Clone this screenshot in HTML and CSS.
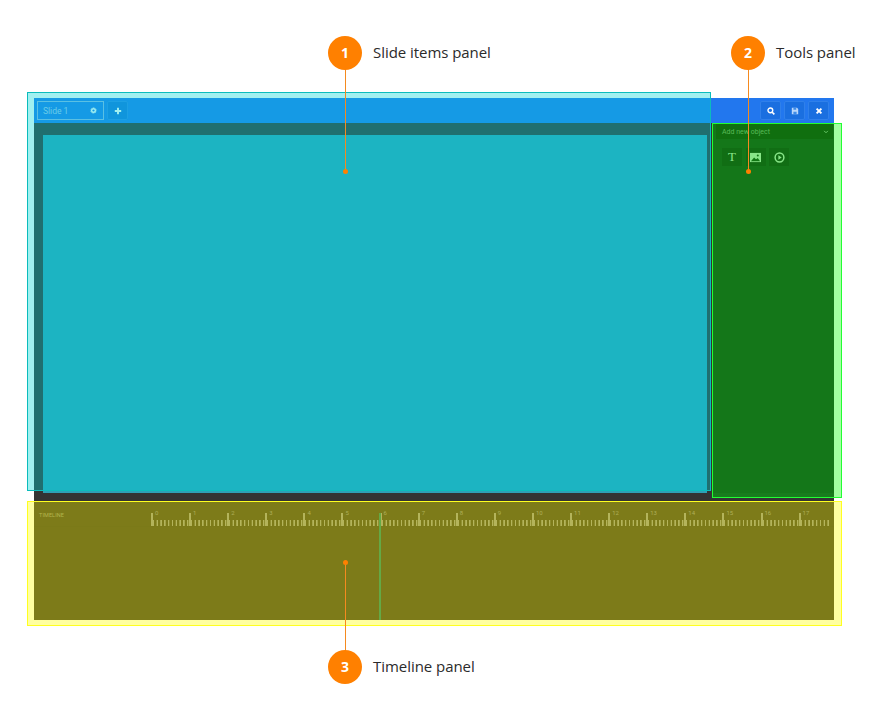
FILE: index.html
```html
<!DOCTYPE html>
<html lang="en">

<head>
  <meta charset="UTF-8">
  <title>Slide editor panels</title>
  <link rel="stylesheet" href="styles.css">
</head>

<body>
  <div class="stage">

    <!-- editor window -->
    <div class="editor">
      <div class="topbar">
        <div class="tabs">
          <div class="tab">
            <span>Slide 1</span>
            <svg class="tab-gear" viewBox="0 0 10 10"><circle cx="5" cy="5" r="2.6" fill="none" stroke="#fff" stroke-width="2"/><circle cx="5" cy="5" r="4" fill="none" stroke="#fff" stroke-width="1" stroke-dasharray="1.4 1.1"/></svg>
          </div>
          <div class="icon-btn">
            <svg viewBox="0 0 10 10"><path d="M5 1v8M1 5h8" stroke="#fff" stroke-width="2.4"/></svg>
          </div>
        </div>
        <div class="actions">
          <div class="icon-btn">
            <svg viewBox="0 0 10 10"><circle cx="4.2" cy="4.2" r="3" fill="none" stroke="#fff" stroke-width="1.7"/><path d="M6.2 6.2l3 3" stroke="#fff" stroke-width="2"/></svg>
          </div>
          <div class="icon-btn">
            <svg viewBox="0 0 10 10"><path d="M1 1h6.5L9 2.5V9H1z" fill="#b9d6fa"/><path d="M3 1h3.5v2.5H3zM3 6h4v3H3z" fill="#3f8ce8"/></svg>
          </div>
          <div class="icon-btn">
            <svg viewBox="0 0 10 10"><path d="M2 2l6 6M8 2l-6 6" stroke="#fff" stroke-width="2.4"/></svg>
          </div>
        </div>
      </div>

      <div class="workspace">
        <div class="canvas-area">
          <div class="canvas"></div>
        </div>
        <div class="tools">
          <div class="tools-head">
            <span>Add new object</span>
            <svg class="chevron" viewBox="0 0 8 8"><path d="M1.5 2.5L4 5l2.5-2.5" fill="none" stroke="#aaa" stroke-width="1.3"/></svg>
          </div>
          <div class="tool-row">
            <div class="tool tool-text">T</div>
            <div class="tool">
              <svg viewBox="0 0 12 10"><rect width="12" height="10" fill="#d8d8d8"/><path d="M1 9l3.5-4 2 2 2-1.5L11 9z" fill="#1c2a20"/><circle cx="8.5" cy="2.8" r="1.1" fill="#1c2a20"/></svg>
            </div>
            <div class="tool">
              <svg viewBox="0 0 12 12"><circle cx="6" cy="6" r="4.8" fill="none" stroke="#d8d8d8" stroke-width="1.6"/><path d="M4.8 3.6L8.4 6 4.8 8.4z" fill="#d8d8d8"/></svg>
            </div>
          </div>
        </div>
      </div>

      <div class="timeline">
        <div class="ruler-row">
          <div class="timeline-label">TIMELINE</div>
          <div class="ruler">
            <div class="unit">0</div>
            <div class="unit">1</div>
            <div class="unit">2</div>
            <div class="unit">3</div>
            <div class="unit">4</div>
            <div class="unit">5</div>
            <div class="unit">6</div>
            <div class="unit">7</div>
            <div class="unit">8</div>
            <div class="unit">9</div>
            <div class="unit">10</div>
            <div class="unit">11</div>
            <div class="unit">12</div>
            <div class="unit">13</div>
            <div class="unit">14</div>
            <div class="unit">15</div>
            <div class="unit">16</div>
            <div class="unit">17</div>
          </div>
        </div>
        <div class="playhead"></div>
      </div>
    </div>

    <!-- coloured overlays -->
    <div class="zone zone-items"></div>
    <div class="zone zone-tools"></div>
    <div class="zone zone-timeline"></div>

    <!-- callouts -->
    <div class="leader leader-items"></div>
    <div class="leader leader-tools"></div>
    <div class="leader leader-timeline"></div>
    <div class="dot dot-items"></div>
    <div class="dot dot-tools"></div>
    <div class="dot dot-timeline"></div>

    <div class="callout callout-items"><b>1</b><span>Slide items panel</span></div>
    <div class="callout callout-tools"><b>2</b><span>Tools panel</span></div>
    <div class="callout callout-timeline"><b>3</b><span>Timeline panel</span></div>
  </div>
</body>

</html>
```

FILE: styles.css
```css
body {
  margin: 0;
  background: #fff;
  font-family: "Roboto", sans-serif;
}

.stage {
  position: relative;
  width: 893px;
  height: 715px;
  overflow: hidden;
}

/* editor window */
.editor {
  position: absolute;
  top: 98px;
  left: 34px;
  width: 800px;
  height: 522px;
  display: flex;
  flex-direction: column;
  background: #333;
}

.topbar {
  height: 25px;
  display: flex;
  justify-content: space-between;
  align-items: center;
  background: #2277ee;
  padding: 0 5px 0 3px;
}

.tabs,
.actions {
  display: flex;
  gap: 3px;
}

.tab {
  width: 67px;
  height: 19px;
  box-sizing: border-box;
  border: 1px solid #8fb4ea;
  display: flex;
  justify-content: space-between;
  align-items: center;
  padding: 0 6px 0 5px;
  color: #a6c8f2;
  font-size: 8.5px;
}

.tab-gear {
  width: 7px;
  height: 7px;
}

.icon-btn {
  width: 21px;
  height: 19px;
  box-sizing: border-box;
  background: #1a6fe0;
  border: 1px solid #2f80ea;
  border-radius: 2px;
  display: flex;
  justify-content: center;
  align-items: center;
}

.icon-btn svg {
  width: 8px;
  height: 8px;
}

.workspace {
  height: 374px;
  display: flex;
  gap: 1px;
}

.canvas-area {
  flex: 1;
  padding: 12px 4px 0 9px;
}

.canvas {
  height: 358px;
  background: #2da0b6;
}

.tools {
  width: 122px;
  box-sizing: border-box;
  background: #202828;
  border-bottom: 4px solid #263030;
}

.tools-head {
  height: 16px;
  margin: 0 1px 0 4px;
  background: #1a1c18;
  display: flex;
  justify-content: space-between;
  align-items: center;
  padding: 1px 4px 0 6px;
  box-sizing: border-box;
  color: #8a9488;
  font-size: 7px;
}

.chevron {
  width: 6px;
  height: 6px;
}

.tool-row {
  display: flex;
  gap: 3.5px;
  padding: 9px 0 0 10px;
}

.tool {
  width: 20px;
  height: 18px;
  background: #1c1a20;
  display: flex;
  justify-content: center;
  align-items: center;
}

.tool svg {
  width: 11px;
  height: 11px;
}

.tool-text {
  font-family: "Liberation Serif", serif;
  font-size: 13px;
  color: #d8d8d8;
}

/* timeline */
.timeline {
  position: relative;
  flex: 1;
  margin-top: 4px;
  background: #312f28;
  overflow: hidden;
}

.ruler-row {
  display: flex;
  height: 25px;
  padding-right: 4px;
  border-bottom: 1px solid #2f2d27;
}

.timeline-label {
  width: 117px;
  padding: 11px 0 0 5px;
  box-sizing: border-box;
  color: #8a8a78;
  font-size: 5.5px;
  letter-spacing: 0.1px;
}

.ruler {
  flex: 1;
  display: flex;
  margin-top: 9px;
  overflow: hidden;
}

.unit {
  flex: 0 0 38.1px;
  height: 16px;
  padding-left: 4px;
  box-sizing: border-box;
  color: #808088;
  font-size: 6px;
  line-height: 6px;
  background:
    linear-gradient(#888890, #888890) 0 3px / 2px 13px no-repeat,
    repeating-linear-gradient(90deg, transparent 0 1.5px, #888890 2px 2.9px, transparent 3.4px 3.81px) 0 10px / 100% 6px no-repeat;
}

.playhead {
  position: absolute;
  top: 12px;
  bottom: 0;
  left: 345px;
  width: 2px;
  background: #0a786e;
}

/* panel overlays */
.zone {
  position: absolute;
  box-sizing: border-box;
}

.zone-items {
  top: 92px;
  left: 27px;
  width: 684px;
  height: 399px;
  background: rgba(0, 215, 215, 0.37);
  border: 1px solid #0bbcbc;
}

.zone-tools {
  top: 123px;
  left: 712px;
  width: 130px;
  height: 375px;
  background: rgba(0, 255, 0, 0.37);
  border: 1px solid #22ff33;
}

.zone-timeline {
  top: 501px;
  left: 27px;
  width: 815px;
  height: 125px;
  background: rgba(255, 255, 0, 0.37);
  border: 1px solid #ffff20;
}

/* callouts */
.leader {
  position: absolute;
  width: 1px;
  background: #f58a1f;
}

.leader-items {
  top: 60px;
  left: 345px;
  height: 110px;
}

.leader-tools {
  top: 60px;
  left: 748px;
  height: 110px;
}

.leader-timeline {
  top: 562px;
  left: 345px;
  height: 95px;
}

.dot {
  position: absolute;
  width: 5px;
  height: 5px;
  border-radius: 50%;
  background: #ff8000;
}

.dot-items {
  top: 169px;
  left: 343px;
}

.dot-tools {
  top: 169px;
  left: 746px;
}

.dot-timeline {
  top: 560px;
  left: 343px;
}

.callout {
  position: absolute;
  display: flex;
  align-items: center;
  gap: 11px;
  font-family: "Open Sans", sans-serif;
  font-size: 15px;
  letter-spacing: -0.05px;
  color: #2b2b2b;
}

.callout span {
  margin-bottom: 2px;
}

.callout b {
  width: 34px;
  height: 34px;
  border-radius: 50%;
  background: #ff8000;
  color: #fff;
  font-size: 14px;
  text-align: center;
  line-height: 34px;
}

.callout-items {
  top: 36px;
  left: 328px;
}

.callout-tools {
  top: 36px;
  left: 731px;
}

.callout-timeline {
  top: 650px;
  left: 328px;
}
```
